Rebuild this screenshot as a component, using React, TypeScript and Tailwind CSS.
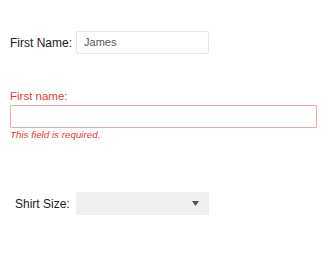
function App() {
  return (
    <div className="w-[328px] h-[274px] bg-white font-['Liberation_Sans',Arial,sans-serif] text-[#222]">
      {/* First name row */}
      <div className="flex items-center pt-[31px] pl-[10px]">
        <span className="text-[12px] mr-[4px]">First Name:</span>
        <div className="w-[133px] h-[23px] border border-[#e6e6e6] rounded-[2px] flex items-center px-[7px] text-[11px] text-[#555]">
          James
        </div>
      </div>

      {/* Error field */}
      <div className="pl-[10px] pt-[36px]">
        <div className="text-[11.5px] text-[#e53935] leading-[13px] mb-[2px]">First name:</div>
        <div className="w-[307px] h-[23px] border border-[#f2a6a6] rounded-[1px]" />
        <div className="text-[9.8px] italic text-[#e53935] leading-[11px] mt-[1px]">This field is required.</div>
      </div>

      {/* Shirt size */}
      <div className="flex items-center pt-[52px] pl-[15px]">
        <span className="text-[12px] mr-[6px]">Shirt Size:</span>
        <div className="w-[133px] h-[23px] bg-[#efefef] rounded-[2px] flex items-center justify-end pr-[10px]">
          <svg width="7" height="5" viewBox="0 0 7 5">
            <path d="M0 0 L7 0 L3.5 5 Z" fill="#555" />
          </svg>
        </div>
      </div>
    </div>
  );
}

export default App;
